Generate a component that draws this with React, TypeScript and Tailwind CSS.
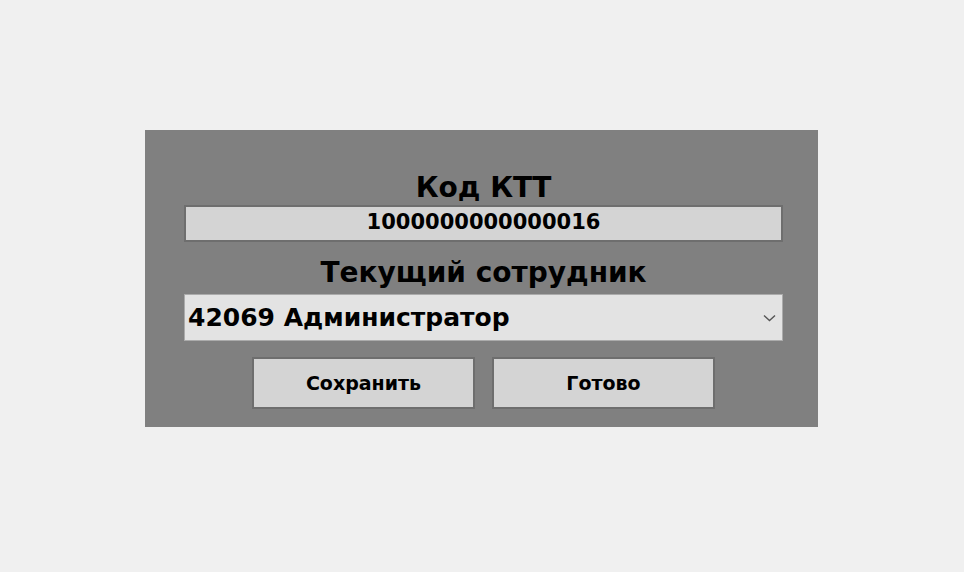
// Terminal settings dialog
const font = "font-['DejaVu_Sans',sans-serif]";

const App = () => {
  return (
    <div className={`w-[964px] h-[572px] bg-[#f0f0f0] pt-[130px] pl-[145px] ${font}`}>
      <div className="w-[673px] h-[297px] bg-[#808080] pt-[41px] pl-[39px] pr-[35px] flex flex-col">
        <h1 className="text-[28px] leading-[34px] font-bold text-black text-center">
          Код КТТ
        </h1>
        <div className="h-[37px] bg-[#d4d4d4] border-2 border-[#6e6e6e] flex items-center justify-center pb-[4px]">
          <span className="text-[21px] leading-[24px] font-bold text-black">
            1000000000000016
          </span>
        </div>
        <h2 className="mt-[14px] text-[28px] leading-[34px] font-bold text-black text-center">
          Текущий сотрудник
        </h2>
        <div className="mt-[4px] h-[47px] bg-[#e3e3e3] border border-[#ababab] flex items-center justify-between pl-[3px] pr-[6px]">
          <span className="text-[25px] leading-[30px] font-bold text-black">
            42069 Администратор
          </span>
          <svg width="13" height="8" viewBox="0 0 13 8" fill="none">
            <path d="M1 1.5 L6.5 6.5 L12 1.5" stroke="#555" strokeWidth="1.4" />
          </svg>
        </div>
        <div className="mt-[16px] flex justify-center gap-[17px]">
          <button className="w-[223px] h-[52px] bg-[#d4d4d4] border-2 border-[#6e6e6e] text-[19px] font-bold text-black">
            Сохранить
          </button>
          <button className="w-[223px] h-[52px] bg-[#d4d4d4] border-2 border-[#6e6e6e] text-[19px] font-bold text-black">
            Готово
          </button>
        </div>
      </div>
    </div>
  );
};

export default App;
